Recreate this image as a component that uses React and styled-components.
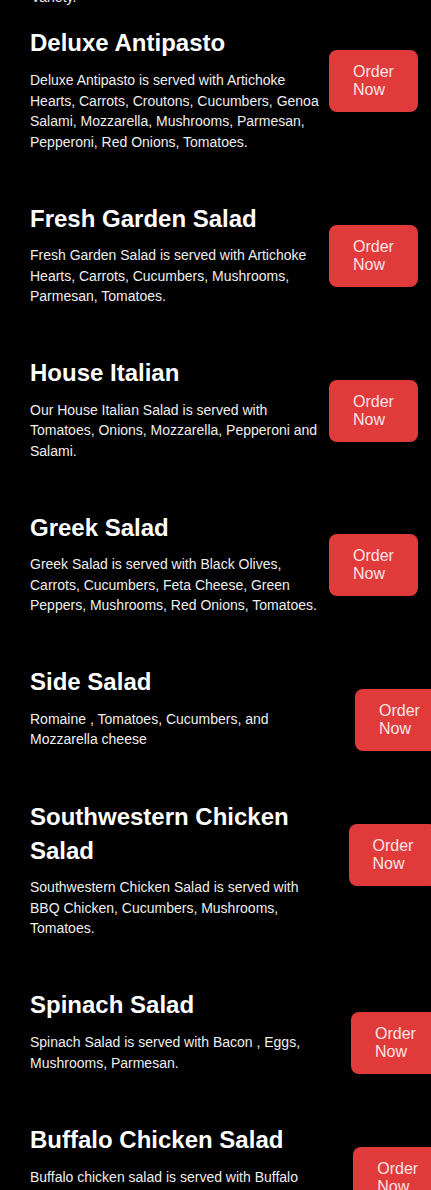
import React from 'react';
import styled, { createGlobalStyle } from 'styled-components';

const GlobalStyle = createGlobalStyle`
  html, body {
    margin: 0;
    padding: 0;
    background: #000;
    overflow-x: hidden;
  }
  body::-webkit-scrollbar {
    display: none;
  }
`;

const Page = styled.div`
  background: #000;
  color: #fff;
  font-family: "Liberation Sans", Arial, sans-serif;
  padding: 0 0 40px 30px;
  min-height: 1190px;
  box-sizing: border-box;
`;

// tail end of the section intro, scrolled mostly out of view
const Intro = styled.p`
  margin: -12.7px 0 18.6px 1px;
  font-size: 14px;
  line-height: 20.5px;
  color: #eee;
`;

const MenuList = styled.div`
  display: flex;
  flex-direction: column;
  gap: 49.5px;
`;

const Row = styled.div`
  display: flex;
  align-items: flex-start;
`;

const Info = styled.div`
  width: 296px;
  flex-shrink: 0;
`;

const Title = styled.h2`
  margin: 0 0 10px;
  font-size: 24px;
  font-weight: 700;
  line-height: 33.6px;
  color: #fff;
`;

const Desc = styled.p`
  margin: 0;
  font-size: 14px;
  line-height: 20.5px;
  color: #eee;
`;

const OrderButton = styled.button`
  flex-shrink: 0;
  width: min-content;
  margin: 23.5px 0 0 ${p => p.$shift}px;
  padding: 13px 24px;
  border: none;
  border-radius: 8px;
  background: #e03a3b;
  color: #fbe4e4;
  font-family: "Liberation Sans", Arial, sans-serif;
  font-size: 16px;
  line-height: normal;
  text-align: left;
  cursor: pointer;
`;

const items = [
  {
    name: 'Deluxe Antipasto',
    desc: 'Deluxe Antipasto is served with Artichoke Hearts, Carrots, Croutons, Cucumbers, Genoa Salami, Mozzarella, Mushrooms, Parmesan, Pepperoni, Red Onions, Tomatoes.',
    shift: 3,
  },
  {
    name: 'Fresh Garden Salad',
    desc: 'Fresh Garden Salad is served with Artichoke Hearts, Carrots, Cucumbers, Mushrooms, Parmesan, Tomatoes.',
    shift: 3,
  },
  {
    name: 'House Italian',
    desc: 'Our House Italian Salad is served with Tomatoes, Onions, Mozzarella, Pepperoni and Salami.',
    shift: 3,
  },
  {
    name: 'Greek Salad',
    desc: 'Greek Salad is served with Black Olives, Carrots, Cucumbers, Feta Cheese, Green Peppers, Mushrooms, Red Onions, Tomatoes.',
    shift: 3,
  },
  {
    name: 'Side Salad',
    desc: 'Romaine , Tomatoes, Cucumbers, and Mozzarella cheese',
    shift: 29,
  },
  {
    name: 'Southwestern Chicken Salad',
    desc: 'Southwestern Chicken Salad is served with BBQ Chicken, Cucumbers, Mushrooms, Tomatoes.',
    shift: 22.5,
  },
  {
    name: 'Spinach Salad',
    desc: 'Spinach Salad is served with Bacon , Eggs, Mushrooms, Parmesan.',
    shift: 25,
  },
  {
    name: 'Buffalo Chicken Salad',
    desc: 'Buffalo chicken salad is served with Buffalo Chicken, Cucumbers, Mushrooms, Red Onions, Tomatoes.',
    shift: 27.3,
  },
];

const App = () => {
  return (
    <Page>
      <GlobalStyle />
      <Intro>Variety.</Intro>
      <MenuList>
        {items.map(item => (
          <Row key={item.name}>
            <Info>
              <Title>{item.name}</Title>
              <Desc>{item.desc}</Desc>
            </Info>
            <OrderButton $shift={item.shift}>Order Now</OrderButton>
          </Row>
        ))}
      </MenuList>
    </Page>
  );
};

export default App;
